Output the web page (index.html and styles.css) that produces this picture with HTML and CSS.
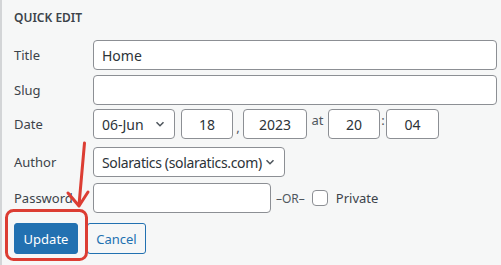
FILE: index.html
```html
<!DOCTYPE html>
<html lang="en">
<head>
<meta charset="utf-8">
<title>Quick Edit</title>
<link rel="stylesheet" href="styles.css">
</head>
<body>
<div class="panel">
  <div class="heading">QUICK EDIT</div>
  <div class="row row-title">
    <span class="label">Title</span>
    <div class="input wide">Home</div>
  </div>
  <div class="row row-slug">
    <span class="label">Slug</span>
    <div class="input wide"></div>
  </div>
  <div class="row row-date">
    <span class="label">Date</span>
    <div class="input select sel-month"><span>06-Jun</span>
      <svg class="chev" width="14" height="14" viewBox="0 0 20 20"><path d="M5 7.5l5 5 5-5" fill="none" stroke="#50575e" stroke-width="2.2"/></svg>
    </div>
    <div class="input num w-day">18</div>
    <span class="sep sep-comma">,</span>
    <div class="input num w-year">2023</div>
    <span class="sep sep-at">at</span>
    <div class="input num w-hour">20</div>
    <span class="sep sep-colon">:</span>
    <div class="input num w-min">04</div>
  </div>
  <div class="row row-author">
    <span class="label">Author</span>
    <div class="input select sel-author"><span class="author-text">Solaratics (solaratics.com)</span>
      <svg class="chev" width="14" height="14" viewBox="0 0 20 20"><path d="M5 7.5l5 5 5-5" fill="none" stroke="#50575e" stroke-width="2.2"/></svg>
    </div>
  </div>
  <div class="row row-pass">
    <span class="label">Password</span>
    <div class="input w-pass"></div>
    <span class="or">–OR–</span>
    <span class="checkbox"></span>
    <span class="private">Private</span>
  </div>
  <div class="row row-buttons">
    <button class="btn primary">Update</button>
    <button class="btn secondary">Cancel</button>
  </div>
</div>
<svg class="annot" width="501" height="265" viewBox="0 0 501 265">
  <rect x="6.5" y="210.5" width="80" height="49" rx="7" fill="none" stroke="#dc3d33" stroke-width="3"/>
  <path d="M84.5 143 L79 205" fill="none" stroke="#dc3d33" stroke-width="3" stroke-linecap="round"/>
  <path d="M68 193 L79 206 L88 192" fill="none" stroke="#dc3d33" stroke-width="3" stroke-linecap="round" stroke-linejoin="round"/>
</svg>
</body>
</html>
```
FILE: styles.css
```css
html, body {
  margin: 0;
  padding: 0;
  background: #f6f7f7;
}
body {
  width: 501px;
  height: 265px;
  overflow: hidden;
  position: relative;
  font-family: "Noto Sans", "Open Sans", sans-serif;
  color: #3c434a;
}
.panel {
  box-sizing: border-box;
  height: 265px;
  border-left: 2px solid #d3d5d7;
  padding: 8px 4px 0 12px;
}
.heading {
  font-size: 12px;
  font-weight: 600;
  line-height: 20px;
  color: #3c434a;
  margin-bottom: 12px;
}
.row {
  display: flex;
  align-items: center;
  font-size: 13px;
  white-space: nowrap;
}
.label {
  width: 79px;
  flex: none;
  font-size: 13px;
  color: #3c434a;
}
.input {
  box-sizing: border-box;
  flex: none;
  height: 30px;
  border: 1px solid #8c8f94;
  border-radius: 4px;
  background: #fff;
  font-size: 14px;
  color: #2c3338;
  display: flex;
  align-items: center;
  padding: 0 8px;
  white-space: nowrap;
  overflow: hidden;
}
.wide { width: 404px; }
.row-slug { margin-top: 5px; }
.row-date { margin-top: 4px; }
.row-author { margin-top: 8px; }
.row-pass { margin-top: 6px; }
.row-buttons { margin-top: 10px; }
.select {
  justify-content: space-between;
  padding: 0 7px 0 8px;
}
.chev { flex: none; }
.sel-month { width: 82px; }
.sel-author { width: 192px; }
.author-text { letter-spacing: -0.35px; }
.num { justify-content: center; }
.w-day { width: 52px; margin-left: 6px; }
.w-year { width: 64px; }
.w-hour { width: 52px; }
.w-min { width: 53px; }
.sep {
  font-size: 13px;
  color: #50575e;
  text-align: center;
  align-self: flex-start;
  line-height: 22px;
}
.sep-comma { width: 10px; align-self: flex-end; line-height: 24px; }
.sep-at { width: 21px; }
.sep-colon { width: 6px; }
.w-pass { width: 178px; }
.or {
  margin-left: 5px;
  font-size: 12px;
  color: #50575e;
}
.checkbox {
  box-sizing: border-box;
  width: 16px;
  height: 16px;
  border: 1px solid #8c8f94;
  border-radius: 4px;
  background: #fff;
  margin-left: 7px;
}
.private {
  margin-left: 8px;
  font-size: 13px;
  color: #3c434a;
}
.btn {
  box-sizing: border-box;
  height: 31px;
  border-radius: 3px;
  font-family: "Noto Sans", "Open Sans", sans-serif;
  font-size: 13px;
  padding: 0;
  cursor: pointer;
}
.primary {
  width: 64px;
  background: #2271b1;
  border: 1px solid #2271b1;
  color: #fff;
}
.secondary {
  width: 59px;
  margin-left: 9px;
  background: #f6f7f7;
  border: 1px solid #2271b1;
  color: #2271b1;
}
.annot {
  position: absolute;
  left: 0;
  top: 0;
  pointer-events: none;
}
```
